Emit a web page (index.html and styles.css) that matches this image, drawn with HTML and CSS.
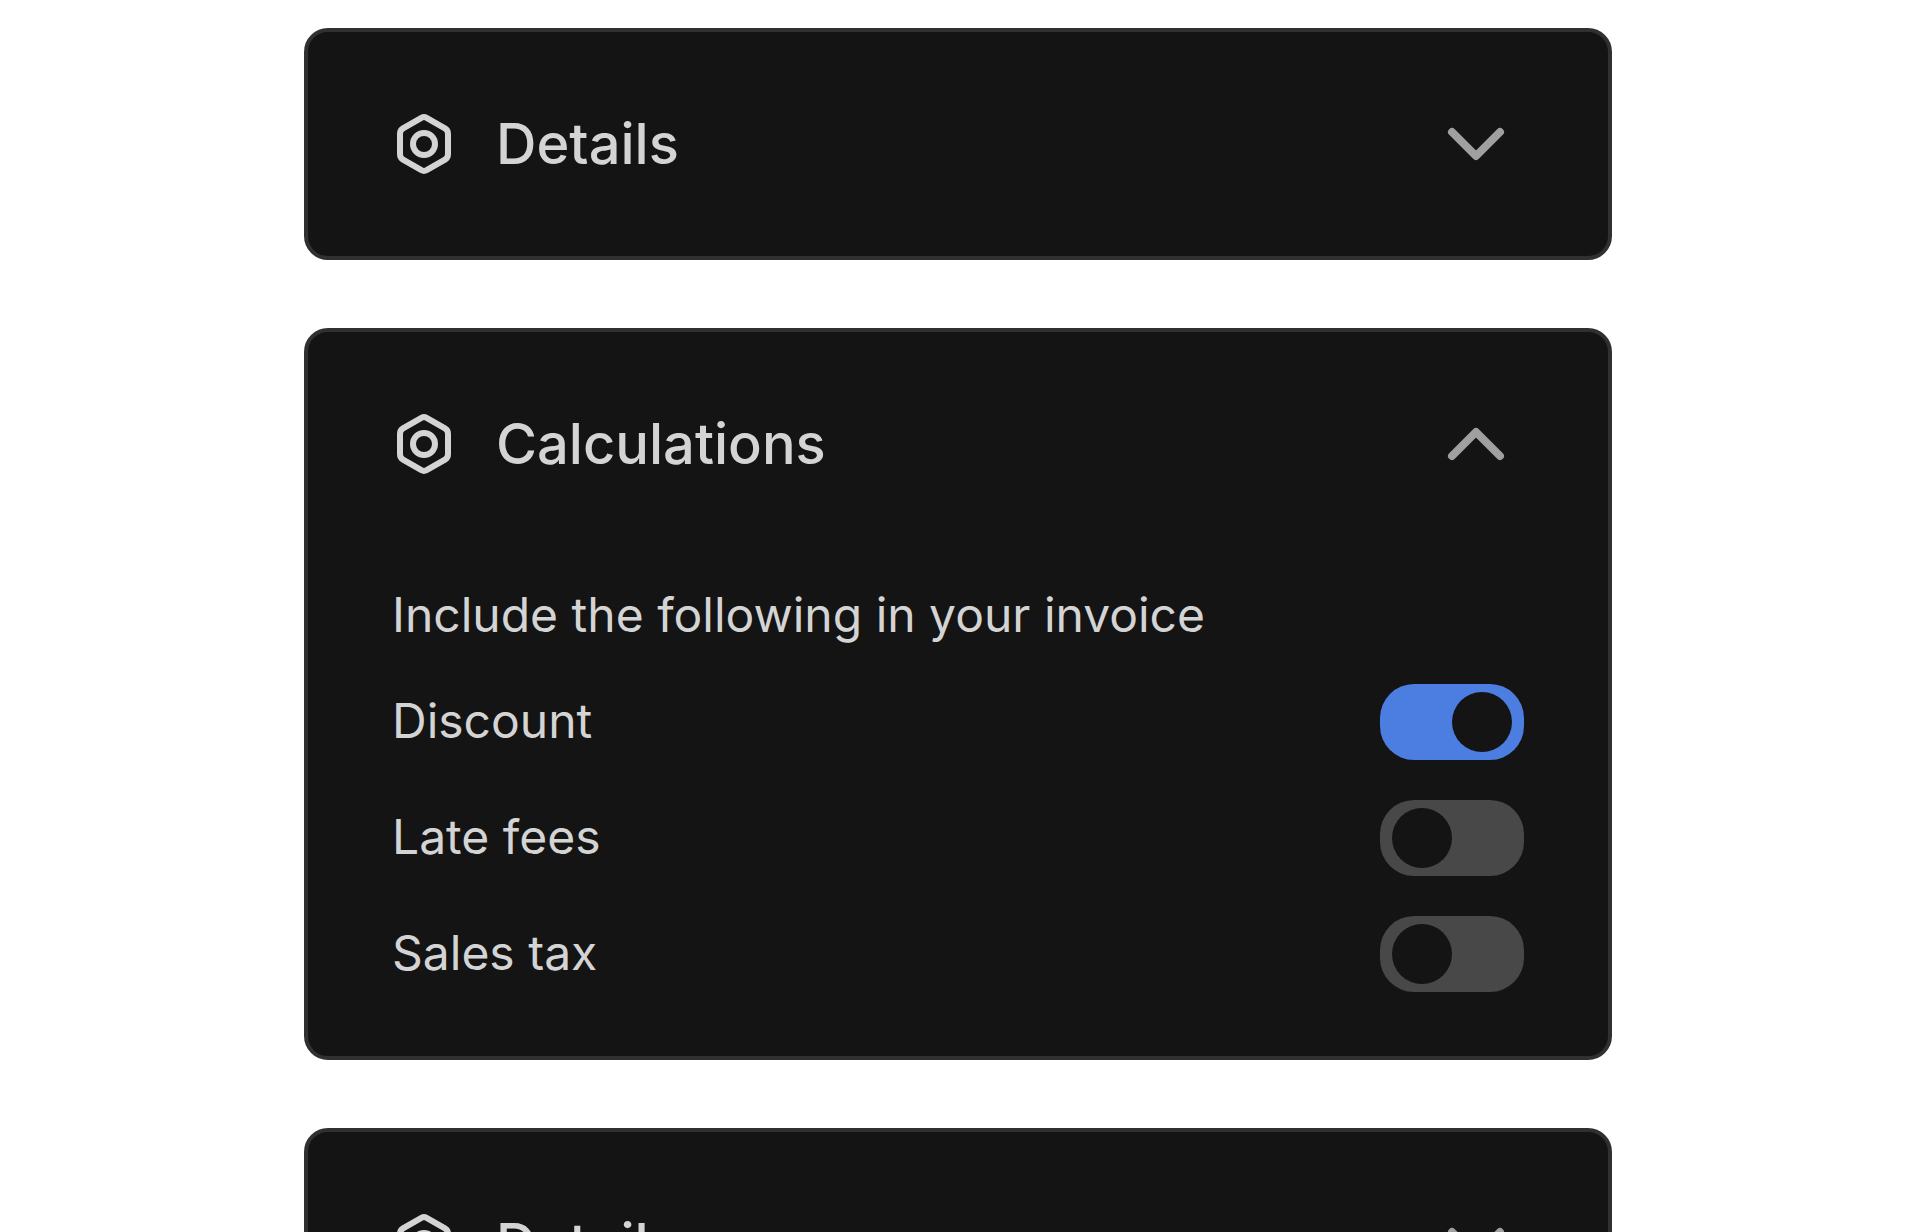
FILE: index.html
```html
<!DOCTYPE html>
<html lang="en">
<head>
  <meta charset="utf-8">
  <meta name="viewport" content="width=device-width, initial-scale=1">
  <title>Invoice settings</title>
  <link rel="stylesheet" href="styles.css">
</head>
<body>
  <svg class="sprite" aria-hidden="true">
    <symbol id="nut" viewBox="0 0 64 64">
      <path d="M29.4 5.8Q32 4.4 34.6 5.8L53 16.4Q56 18.2 56 21.7V42.3Q56 45.8 53 47.6L34.6 58.2Q32 59.6 29.4 58.2L11 47.6Q8 45.8 8 42.3V21.7Q8 18.2 11 16.4Z"/>
      <circle cx="32" cy="32" r="11"/>
    </symbol>
    <symbol id="chevron-down" viewBox="0 0 96 96">
      <path d="M24 36L48 60L72 36"/>
    </symbol>
    <symbol id="chevron-up" viewBox="0 0 96 96">
      <path d="M24 60L48 36L72 60"/>
    </symbol>
  </svg>

  <main class="panels">
    <section class="card">
      <header class="card-header">
        <svg class="card-icon" aria-hidden="true"><use href="#nut"/></svg>
        <h2 class="card-title">Details</h2>
        <button class="card-toggle" type="button" aria-expanded="false" aria-label="Expand details">
          <svg class="chevron" aria-hidden="true"><use href="#chevron-down"/></svg>
        </button>
      </header>
    </section>

    <section class="card">
      <header class="card-header">
        <svg class="card-icon" aria-hidden="true"><use href="#nut"/></svg>
        <h2 class="card-title">Calculations</h2>
        <button class="card-toggle" type="button" aria-expanded="true" aria-label="Collapse calculations">
          <svg class="chevron" aria-hidden="true"><use href="#chevron-up"/></svg>
        </button>
      </header>
      <div class="card-body">
        <p class="intro">Include the following in your invoice</p>
        <div class="options">
          <div class="option">
            <label class="option-label" for="discount">Discount</label>
            <input class="switch" type="checkbox" id="discount" checked>
          </div>
          <div class="option">
            <label class="option-label" for="late-fees">Late fees</label>
            <input class="switch" type="checkbox" id="late-fees">
          </div>
          <div class="option">
            <label class="option-label" for="sales-tax">Sales tax</label>
            <input class="switch" type="checkbox" id="sales-tax">
          </div>
        </div>
      </div>
    </section>

    <section class="card">
      <header class="card-header">
        <svg class="card-icon" aria-hidden="true"><use href="#nut"/></svg>
        <h2 class="card-title">Details</h2>
        <button class="card-toggle" type="button" aria-expanded="false" aria-label="Expand details">
          <svg class="chevron" aria-hidden="true"><use href="#chevron-down"/></svg>
        </button>
      </header>
    </section>
  </main>
</body>
</html>
```
FILE: styles.css
```css
* {
  box-sizing: border-box;
}

body {
  margin: 0;
  background: #fff;
  color: #d4d4d4;
  font-family: Inter, "Liberation Sans", sans-serif;
  font-size: 48px;
  line-height: 74px;
}

.sprite {
  display: none;
}

.panels {
  display: flex;
  flex-direction: column;
  gap: 68px;
  max-width: 1308px;
  margin: 0 auto;
  padding: 28px 0;
}

.card {
  padding: 64px 84px;
  border: 4px solid #303030;
  border-radius: 24px;
  background: #141414;
}

.card-header {
  display: flex;
  align-items: center;
}

.card-icon {
  width: 64px;
  height: 64px;
  margin-right: 40px;
  fill: none;
  stroke: #d4d4d4;
  stroke-width: 6;
}

.card-title {
  flex: 1;
  margin: 0;
  font-size: 56px;
  font-weight: 500;
}

.card-toggle {
  width: 96px;
  height: 96px;
  padding: 0;
  border: 0;
  background: none;
  cursor: pointer;
}

.chevron {
  display: block;
  width: 96px;
  height: 96px;
  fill: none;
  stroke: #a0a0a0;
  stroke-width: 8;
  stroke-linecap: round;
  stroke-linejoin: round;
}

.card-body {
  padding-top: 86px;
}

.intro {
  margin: 0 0 32px;
}

.options {
  display: flex;
  flex-direction: column;
  gap: 40px;
}

.option {
  display: flex;
  align-items: flex-start;
  justify-content: space-between;
}

.switch {
  appearance: none;
  flex: none;
  display: flex;
  align-items: center;
  width: 144px;
  height: 76px;
  margin: 0;
  padding: 0 12px;
  border-radius: 34px;
  background: #484848;
  cursor: pointer;
}

.switch::before {
  content: "";
  width: 60px;
  height: 60px;
  border-radius: 50%;
  background: #141414;
}

.switch:checked {
  justify-content: flex-end;
  background: #4c7ee1;
}
```
